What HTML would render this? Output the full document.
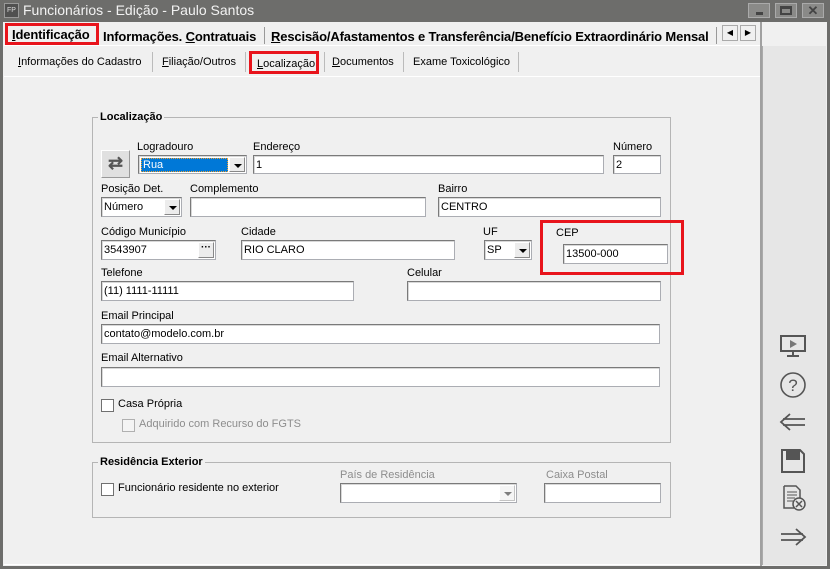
<!DOCTYPE html>
<html><head><meta charset="utf-8"><style>
*{box-sizing:border-box;margin:0;padding:0}
body{width:830px;height:569px;background:#6d6d6b;font-family:"Liberation Sans",sans-serif;font-size:11px;color:#000;position:relative;overflow:hidden}
.a{position:absolute}
.lbl{position:absolute;font-size:11px;white-space:nowrap}
.in{position:absolute;background:#fff;border:1px solid #abadb3;border-top-color:#7a7a7a;border-left-color:#7a7a7a;box-shadow:inset 1px 1px 0 #d8d8d8;height:20px;font-size:11px;padding:3px 0 0 2px;white-space:nowrap}
.dd{position:absolute;right:1px;top:1px;width:16px;bottom:1px;background:#ececec;border:1px solid #fff;border-right-color:#888;border-bottom-color:#888}
.dd.ar:after{content:"";position:absolute;left:4px;top:6px;border-left:4px solid transparent;border-right:4px solid transparent;border-top:4px solid #000}
.grp{position:absolute;border:1px solid #b5b5b5}
.gt{position:absolute;background:#f0f0f0;font-weight:bold;padding:0 2px;font-size:11px}
.cb{position:absolute;width:13px;height:13px;background:#fff;border:1px solid #707070}
.red{position:absolute;border:3px solid #e8141c}
.ico{position:absolute;left:779px}
.tb{font-size:13px;font-weight:bold;letter-spacing:-0.15px}
</style></head><body>
<div class="a" style="left:4px;top:3px;width:15px;height:15px;background:#505050;border:1px solid #999;color:#ddd;font-size:7px;line-height:13px;text-align:center">FP</div>
<div class="lbl" style="left:23px;top:2px;font-size:14px;color:#f2f2f2">Funcionários - Edição - Paulo Santos</div>
<div class="a" style="left:748px;top:3px;width:22px;height:15px;background:#8a8a88;border:1px solid #aaa"><div class="a" style="left:7px;top:8px;width:7px;height:3px;background:#444"></div></div>
<div class="a" style="left:775px;top:3px;width:22px;height:15px;background:#8a8a88;border:1px solid #aaa"><div class="a" style="left:4px;top:2px;width:12px;height:9px;border:2px solid #444;border-top-width:3px"></div></div>
<div class="a" style="left:802px;top:3px;width:22px;height:15px;background:#8a8a88;border:1px solid #aaa;color:#444;font-weight:bold;font-size:13px;text-align:center;line-height:13px">✕</div>
<div class="a" style="left:3px;top:22px;width:824px;height:544px;background:#f0f0f0"></div>
<div class="a" style="left:762px;top:46px;width:64px;height:519px;background:#e6e6e6;border-left:1px solid #aaa"></div>
<div class="a" style="left:760px;top:22px;width:2px;height:544px;background:#a0a0a0"></div>
<div class="a" style="left:4px;top:45px;width:756px;height:1px;background:#fff"></div>
<div class="lbl tb" style="left:12px;top:27px"><u>I</u>dentificação</div>
<div class="red" style="left:5px;top:23px;width:94px;height:22px"></div>
<div class="lbl tb" style="left:103px;top:29px">Informações. <u>C</u>ontratuais</div>
<div class="a" style="left:264px;top:27px;width:1px;height:17px;background:#999"></div>
<div class="lbl tb" style="left:271px;top:29px"><u>R</u>escisão/Afastamentos e Transferência/Benefício Extraordinário Mensal</div>
<div class="a" style="left:716px;top:27px;width:1px;height:17px;background:#999"></div>
<div class="a" style="left:718px;top:25px;width:3px;height:18px;background:#f0f0f0"></div>
<div class="a" style="left:722px;top:25px;width:16px;height:16px;background:#f0f0f0;border:1px solid #aaa;font-size:8px;text-align:center;line-height:14px">◀</div>
<div class="a" style="left:740px;top:25px;width:16px;height:16px;background:#f0f0f0;border:1px solid #aaa;font-size:8px;text-align:center;line-height:14px">▶</div>
<div class="lbl" style="left:18px;top:56px"><u>I</u>nformações do Cadastro</div>
<div class="a" style="left:152px;top:52px;width:1px;height:20px;background:#bbb"></div>
<div class="lbl" style="left:162px;top:56px"><u>F</u>iliação/Outros</div>
<div class="a" style="left:245px;top:52px;width:1px;height:20px;background:#bbb"></div>
<div class="lbl" style="left:257px;top:58px"><u>L</u>ocalização</div>
<div class="red" style="left:249px;top:51px;width:70px;height:23px"></div>
<div class="a" style="left:324px;top:52px;width:1px;height:20px;background:#bbb"></div>
<div class="lbl" style="left:332px;top:56px"><u>D</u>ocumentos</div>
<div class="a" style="left:403px;top:52px;width:1px;height:20px;background:#bbb"></div>
<div class="lbl" style="left:413px;top:56px">Exame Toxicológico</div>
<div class="a" style="left:518px;top:52px;width:1px;height:20px;background:#bbb"></div>
<div class="a" style="left:4px;top:76px;width:756px;height:1px;background:#fff"></div>
<div class="a" style="left:4px;top:564px;width:756px;height:1px;background:#fff"></div>
<div class="grp" style="left:92px;top:117px;width:579px;height:326px"></div>
<div class="gt" style="left:98px;top:111px">Localização</div>
<div class="a" style="left:101px;top:150px;width:29px;height:28px;background:#e0e0e0;border:1px solid #fff;border-right-color:#999;border-bottom-color:#999;color:#555;font-size:18px;text-align:center;line-height:24px;font-weight:bold">⇄</div>
<div class="lbl" style="left:137px;top:141px">Logradouro</div>
<div class="in" style="left:138px;top:155px;width:109px;height:19px;padding:2px"><span style="background:#0078d7;color:#fff;display:inline-block;width:87px;height:14px;padding-left:1px;border:1px dotted #f0a030">Rua</span><div class="dd ar"></div></div>
<div class="lbl" style="left:253px;top:141px">Endereço</div>
<div class="in" style="left:253px;top:155px;width:351px;height:19px">1</div>
<div class="lbl" style="left:613px;top:141px">Número</div>
<div class="in" style="left:613px;top:155px;width:48px;height:19px">2</div>
<div class="lbl" style="left:101px;top:183px">Posição Det.</div>
<div class="in" style="left:101px;top:197px;width:81px">Número<div class="dd ar"></div></div>
<div class="lbl" style="left:190px;top:183px">Complemento</div>
<div class="in" style="left:190px;top:197px;width:236px"></div>
<div class="lbl" style="left:438px;top:183px">Bairro</div>
<div class="in" style="left:438px;top:197px;width:223px">CENTRO</div>
<div class="lbl" style="left:101px;top:226px">Código Município</div>
<div class="in" style="left:101px;top:240px;width:115px">3543907<div class="dd" style="font-size:10px;text-align:center;line-height:10px;font-weight:bold">···</div></div>
<div class="lbl" style="left:241px;top:226px">Cidade</div>
<div class="in" style="left:241px;top:240px;width:214px">RIO CLARO</div>
<div class="lbl" style="left:483px;top:226px">UF</div>
<div class="in" style="left:484px;top:240px;width:48px">SP<div class="dd ar"></div></div>
<div class="red" style="left:540px;top:220px;width:144px;height:55px"></div>
<div class="lbl" style="left:556px;top:227px">CEP</div>
<div class="in" style="left:563px;top:244px;width:105px">13500-000</div>
<div class="lbl" style="left:101px;top:267px">Telefone</div>
<div class="in" style="left:101px;top:281px;width:253px">(11) 1111-11111</div>
<div class="lbl" style="left:407px;top:267px">Celular</div>
<div class="in" style="left:407px;top:281px;width:254px"></div>
<div class="lbl" style="left:101px;top:310px">Email Principal</div>
<div class="in" style="left:101px;top:324px;width:559px">contato@modelo.com.br</div>
<div class="lbl" style="left:101px;top:352px">Email Alternativo</div>
<div class="in" style="left:101px;top:367px;width:559px"></div>
<div class="cb" style="left:101px;top:399px"></div>
<div class="lbl" style="left:118px;top:398px">Casa Própria</div>
<div class="cb" style="left:122px;top:419px;background:#f4f4f4;border-color:#b0b0b0"></div>
<div class="lbl" style="left:139px;top:418px;color:#8d8d8d">Adquirido com Recurso do FGTS</div>
<div class="grp" style="left:92px;top:462px;width:579px;height:56px"></div>
<div class="gt" style="left:98px;top:456px">Residência Exterior</div>
<div class="cb" style="left:101px;top:483px"></div>
<div class="lbl" style="left:118px;top:482px">Funcionário residente no exterior</div>
<div class="lbl" style="left:340px;top:469px;color:#8d8d8d">País de Residência</div>
<div class="in" style="left:340px;top:483px;width:177px"><div class="dd ar" style="opacity:.5"></div></div>
<div class="lbl" style="left:546px;top:469px;color:#8d8d8d">Caixa Postal</div>
<div class="in" style="left:544px;top:483px;width:117px"></div>
<svg class="ico" style="top:333px" width="28" height="26" viewBox="0 0 28 26" fill="none" stroke="#555" stroke-width="2"><rect x="2" y="3" width="24" height="15"/><path d="M14 18v4M8 23h12"/><path d="M11 7l7 4-7 4z" fill="#777" stroke="none"/></svg>
<svg class="ico" style="top:371px" width="28" height="28" viewBox="0 0 28 28" fill="none" stroke="#555" stroke-width="1.6"><circle cx="14" cy="14" r="12"/><text x="14" y="20" font-family="Liberation Sans" font-size="17" fill="#555" stroke="none" text-anchor="middle">?</text></svg>
<svg class="ico" style="top:412px" width="28" height="20" viewBox="0 0 28 20" fill="none" stroke="#555" stroke-width="1.8"><path d="M11 2L2 10l9 8M4 7h22M4 13h22"/></svg>
<svg class="ico" style="top:448px" width="28" height="26" viewBox="0 0 28 26" fill="none" stroke="#555" stroke-width="2"><path d="M3 2h18l4 4v18H3z"/><rect x="8" y="2" width="12" height="9" fill="#555"/></svg>
<svg class="ico" style="top:484px" width="28" height="28" viewBox="0 0 28 28" fill="none" stroke="#555" stroke-width="1.5"><path d="M5 2h12l4 4v8M5 2v22h10"/><path d="M8 8h10M8 11h10M8 14h8M8 17h6" stroke-width="1"/><circle cx="20" cy="20" r="6"/><path d="M17 17l6 6M23 17l-6 6"/></svg>
<svg class="ico" style="top:527px" width="28" height="20" viewBox="0 0 28 20" fill="none" stroke="#555" stroke-width="1.8"><path d="M17 2l9 8-9 8M2 7h22M2 13h22"/></svg>
</body></html>
